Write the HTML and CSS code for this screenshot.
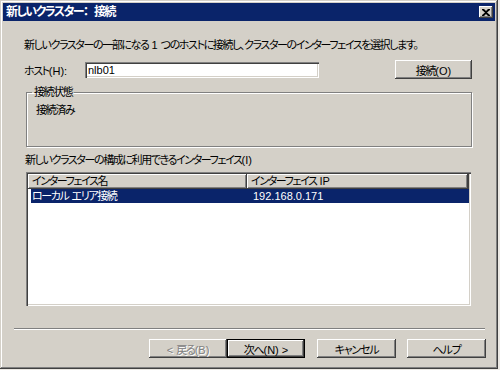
FILE: index.html
```html
<!DOCTYPE html>
<html>
<head>
    <title>新しいクラスター： 接続</title>
    <meta charset="utf-8">
    <link rel="stylesheet" href="styles.css">
</head>
<body>
    <div class="window">
        <div class="titlebar">
            <span class="title">新しいクラスター：<span class="lat">  </span>接続</span>
            <span class="close-btn">
                <svg width="8" height="7" viewBox="0 0 8 7">
                    <path d="M0 0h2l2 2 2-2h2v1L5 3.5 8 6v1H6L4 5 2 7H0V6l3-2.5L0 1z" fill="#000"/>
                </svg>
            </span>
        </div>

        <div class="content">
            <p class="intro">新しいクラスターの一部になる<span class="lat"> 1 </span>つのホストに接続し、クラスターのインターフェイスを選択します。</p>

            <div class="host-row">
                <label class="host-label">ホスト<span class="lat">(H):</span></label>
                <div class="textbox">nlb01</div>
                <button class="btn connect-btn">接続<span class="lat">(O)</span></button>
            </div>

            <fieldset class="group">
                <legend>接続状態</legend>
                <div class="status">接続済み</div>
            </fieldset>

            <p class="list-label">新しいクラスターの構成に利用できるインターフェイス<span class="lat">(I)</span></p>

            <div class="listview">
                <div class="list-header">
                    <div class="col-head">インターフェイス名</div>
                    <div class="col-head">インターフェイス<span class="lat"> IP</span></div>
                    <div class="col-head col-rest"></div>
                </div>
                <div class="list-row selected">
                    <div class="cell">ローカル<span class="lat"> </span>エリア接続</div>
                    <div class="cell ip">192.168.0.171</div>
                </div>
            </div>
        </div>

        <div class="separator"></div>

        <div class="buttons">
            <button class="btn disabled"><span class="lat">&lt; </span>戻る<span class="lat">(B)</span></button>
            <button class="btn default">次へ<span class="lat">(N) &gt;</span></button>
            <button class="btn cancel-btn">キャンセル</button>
            <button class="btn help-btn">ヘルプ</button>
        </div>
    </div>
</body>
</html>
```

FILE: styles.css
```css
html, body {
    margin: 0;
    padding: 0;
    background: #ece9e4;
}

body {
    font-family: "Liberation Sans", "Noto Sans CJK JP", sans-serif;
    font-size: 11px;
    font-feature-settings: "palt";
    letter-spacing: -1.4px;
    color: #000;
}

/* latin runs keep their natural spacing */
.lat {
    letter-spacing: 0;
    white-space: pre;
}

.window {
    width: 498px;
    height: 369px;
    box-sizing: border-box;
    padding: 3px;
    overflow: hidden;
    background: #d4d0c8;
    box-shadow: inset -1px -1px #404040, inset 1px 1px #d4d0c8,
                inset -2px -2px #808080, inset 2px 2px #fff;
}

.titlebar {
    height: 18px;
    background: #0a246a;
    display: flex;
    align-items: center;
    justify-content: space-between;
    padding: 0 2px 0 3px;
}

.title {
    color: #fff;
    font-weight: bold;
    font-size: 12px;
    line-height: 18px;
    letter-spacing: -1.6px;
    white-space: pre;
}

.close-btn {
    width: 14px;
    height: 12px;
    background: #d4d0c8;
    display: flex;
    align-items: center;
    justify-content: center;
    box-shadow: inset -1px -1px #404040, inset 1px 1px #fff,
                inset -2px -2px #808080;
}

.content {
    padding: 17px 23px 0 21px;
}

p {
    margin: 0;
    line-height: 14px;
    white-space: nowrap;
}

.host-row {
    display: flex;
    align-items: center;
    margin-top: 8px;
    height: 19px;
}

.host-row > * {
    flex: none;
}

.host-label {
    width: 61px;
}

.textbox {
    width: 234px;
    height: 16px;
    box-sizing: border-box;
    background: #fff;
    padding: 1px 0 0 3px;
    line-height: 14px;
    letter-spacing: 0;
    box-shadow: inset 1px 1px #808080, inset 2px 2px #404040,
                inset -1px -1px #fff, inset -2px -2px #d4d0c8;
}

.btn {
    font: inherit;
    font-feature-settings: "palt";
    letter-spacing: -1.2px;
    height: 19px;
    width: 78px;
    padding: 0;
    border: none;
    background: #d4d0c8;
    color: #000;
    box-shadow: inset -1px -1px #404040, inset 1px 1px #fff,
                inset -2px -2px #808080;
}

.connect-btn {
    margin-left: auto;
    width: 77px;
}

.group {
    margin: 6px 0 0 2px;
    padding: 0 8px 0 9px;
    height: 62px;
    box-sizing: border-box;
    border: 1px solid #808080;
    box-shadow: inset 1px 1px #fff, 1px 1px #fff;
}

.group legend {
    padding: 0 2px;
    margin-left: -4px;
    line-height: 14px;
}

.status {
    margin-top: 4px;
    line-height: 14px;
}

.list-label {
    margin-top: 6px;
    margin-left: 1px;
}

.listview {
    margin: 5px 1px 0 2px;
    height: 134px;
    box-sizing: border-box;
    background: #fff;
    padding: 2px;
    box-shadow: inset 1px 1px #808080, inset 2px 2px #404040,
                inset -1px -1px #fff, inset -2px -2px #d4d0c8;
}

.list-header {
    display: grid;
    grid-template-columns: 219px 221px 1fr;
    height: 15px;
}

.col-head {
    background: #d4d0c8;
    padding-left: 4px;
    line-height: 14px;
    white-space: nowrap;
    box-shadow: inset -1px -1px #404040, inset 1px 1px #fff,
                inset -2px -2px #808080;
}

.col-rest {
    padding: 0;
}

.list-row {
    display: grid;
    grid-template-columns: 216px 221px;
    margin-left: 3px;
    height: 14px;
    line-height: 14px;
}

.list-row .cell {
    padding-left: 1px;
    white-space: nowrap;
}

.list-row .ip {
    padding-left: 6px;
    letter-spacing: 0;
}

.selected {
    background: #0a246a;
    color: #fff;
}

.separator {
    margin: 22px 10px 0 11px;
    height: 0;
    border-top: 1px solid #808080;
    border-bottom: 1px solid #fff;
}

.buttons {
    display: flex;
    justify-content: flex-end;
    margin-top: 9px;
    padding-right: 9px;
}

.btn.disabled {
    color: #808080;
    text-shadow: 1px 1px #fff;
}

.btn.default {
    box-shadow: inset 0 0 0 1px #000, inset -2px -2px #404040,
                inset 2px 2px #fff, inset -3px -3px #808080;
}

.cancel-btn {
    margin-left: 12px;
    width: 79px;
}

.help-btn {
    margin-left: 11px;
    width: 79px;
}
```
